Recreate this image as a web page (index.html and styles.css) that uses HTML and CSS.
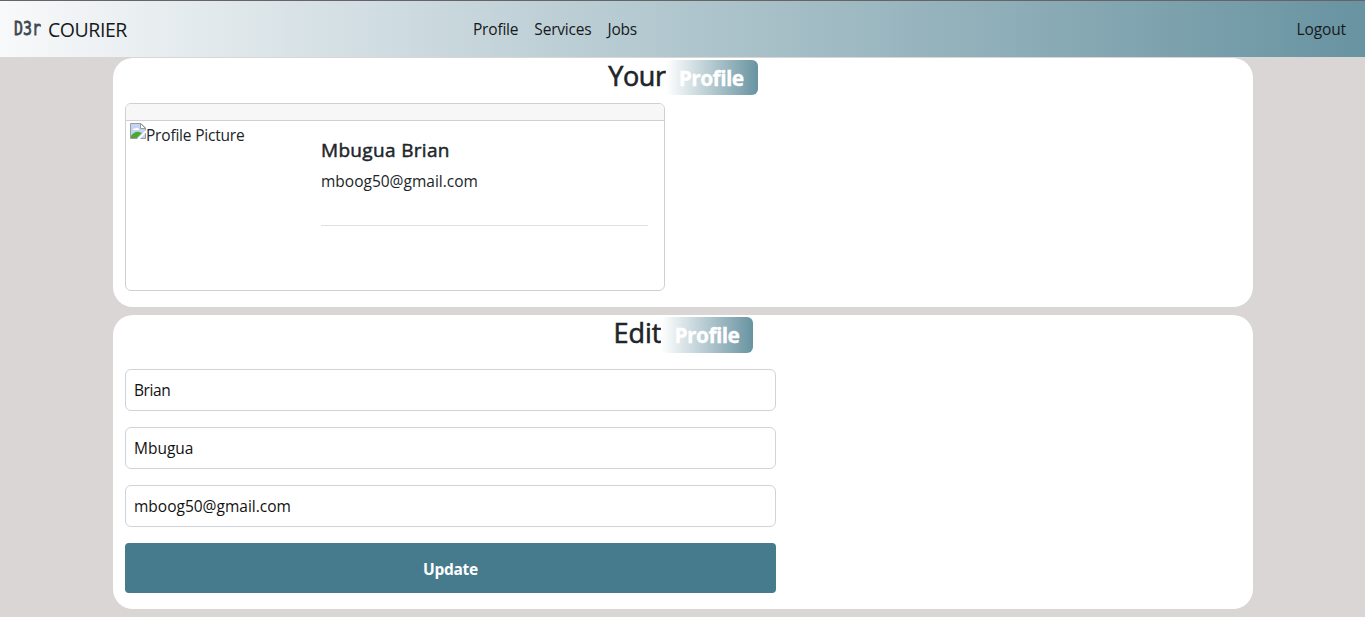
FILE: index.html
```html
<!DOCTYPE html>
<html lang="en">
<head>
<meta charset="utf-8">
<title>Courier - Profile</title>
<link rel="stylesheet" href="styles.css">
</head>
<body>
<nav class="navbar">
  <a class="brand"><svg class="logo" width="28" height="24" viewBox="0 0 28 24"><text transform="translate(0 19) scale(1 1.25)" textLength="27" lengthAdjust="spacingAndGlyphs">D3r</text></svg><span class="brand-name">COURIER</span></a>
  <div class="links"><a>Profile</a><a>Services</a><a>Jobs</a></div>
  <a class="logout">Logout</a>
</nav>
<main class="container">
  <section class="panel panel-view">
    <h2 class="title"><span class="word your">Your</span><span class="badge">Profile</span></h2>
    <div class="card">
      <div class="card-header"></div>
      <div class="card-row">
        <div class="picture"><svg class="broken" width="16" height="16" viewBox="0 0 16 16"><path d="M.5.5H11L15.500 5v10.500H.5z" fill="#c3d5f5" stroke="#9c9c9c"/><path d="M3 7c0-1.500 1.500-2.300 2.500-1.500C6.500 4 9 4.500 9 7z" fill="#fff"/><path d="M1 15v-2c2-3 5-5 8-4l3 1-5 5z" fill="#4fa636"/><path d="M16 7v2.500L10 16H7z" fill="#fff"/><path d="M10.500.5v5h5z" fill="#fff" stroke="#999"/></svg><span class="alt">Profile Picture</span></div>
        <div class="info">
          <h5 class="name">Mbugua Brian</h5>
          <p class="email">mboog50@gmail.com</p>
          <hr class="rule">
        </div>
      </div>
    </div>
  </section>
  <section class="panel panel-edit">
    <h2 class="title"><span class="word">Edit</span><span class="badge">Profile</span></h2>
    <form class="form">
      <div class="input short">Brian</div>
      <div class="input">Mbugua</div>
      <div class="input">mboog50@gmail.com</div>
      <button class="update" type="button">Update</button>
    </form>
  </section>
</main>
</body>
</html>
```
FILE: styles.css
```css
* { box-sizing: border-box; }
body {
  margin: 0;
  height: 617px;
  overflow: hidden;
  background: #dad6d5;
  color: #212529;
  font: 15.5px/24px "Segoe UI", "Open Sans", "Noto Sans", sans-serif;
  letter-spacing: -0.12px;
}
.navbar {
  display: grid;
  grid-template-columns: 473px 1fr auto;
  align-items: center;
  height: 57px;
  padding: 0 19px 0 0;
  border-top: 1px solid #666467;
  background: linear-gradient(to right, #f8f9fa, #6893a1);
  color: #16191c;
}
.brand { display: flex; align-items: center; padding: 1px 0 0 14px; }
.logo { display: block; margin-bottom: 4px; }
.logo text { font: 16px "DejaVu Sans Mono", monospace; fill: #3d4750; stroke: #3d4750; stroke-width: .6; letter-spacing: 0; }
.brand-name { margin-left: 6px; font-size: 19.5px; line-height: 30px; letter-spacing: -0.45px; }
.links { display: flex; gap: 16px; letter-spacing: -0.2px; }
.container { width: 1140px; margin: 1px 0 0 113px; }
.panel { padding: 0 12px; border-radius: 20px; background: #fff; }
.panel-view { height: 249px; }
.panel-edit { height: 294px; margin-top: 8px; }
.title {
  display: flex;
  justify-content: center;
  align-items: flex-start;
  height: 45px;
  margin: 0;
  padding-top: 2px;
  font-size: 27px;
  font-weight: 400;
  line-height: 32px;
  letter-spacing: 0;
}
.word { -webkit-text-stroke: 0.6px #212529; }
.your { letter-spacing: -0.4px; }
.badge {
  width: 92px;
  height: 35px;
  padding-left: 13px;
  border-radius: 6px;
  background: linear-gradient(to right, #fff, #6893a1);
  color: #fff;
  font-size: 21px;
  font-weight: 700;
  line-height: 36px;
  letter-spacing: -0.6px;
  -webkit-text-stroke: 0.3px #fff;
}
.card { width: 540px; height: 188px; border: 1px solid #d0d0d1; border-radius: 6px; overflow: hidden; }
.card-header { height: 17px; border-bottom: 1px solid #d0d0d1; background: #f7f7f7; }
.card-row { display: flex; }
.picture { display: flex; width: 179px; padding: 2px 0 0 4px; }
.alt { line-height: 24px; letter-spacing: -0.2px; }
.info { width: 343px; padding: 17px 0 0 16px; }
.name { margin: 0 0 7px; font-size: 19px; font-weight: 400; line-height: 24px; letter-spacing: 0.33px; -webkit-text-stroke: 0.5px #212529; }
.email { margin: 0; letter-spacing: 0; }
.rule { height: 1px; margin: 32px 0 0; border: 0; background: #dedfdf; }
.panel-edit .title { height: 54px; padding-left: 1px; }
.panel-edit .badge { height: 36px; }
.form { display: flex; flex-direction: column; gap: 16px; width: 651px; }
.input { height: 42px; padding: 8px 8px 0; border: 1px solid #ced4da; border-radius: 6px; color: #111; letter-spacing: 0; }
.short { letter-spacing: -0.4px; }
.update {
  height: 50px;
  padding: 1px 0 0;
  border: 0;
  border-radius: 4px;
  background: #457b8c;
  color: #fff;
  font: inherit;
  font-weight: 700;
  letter-spacing: -0.3px;
}
```
